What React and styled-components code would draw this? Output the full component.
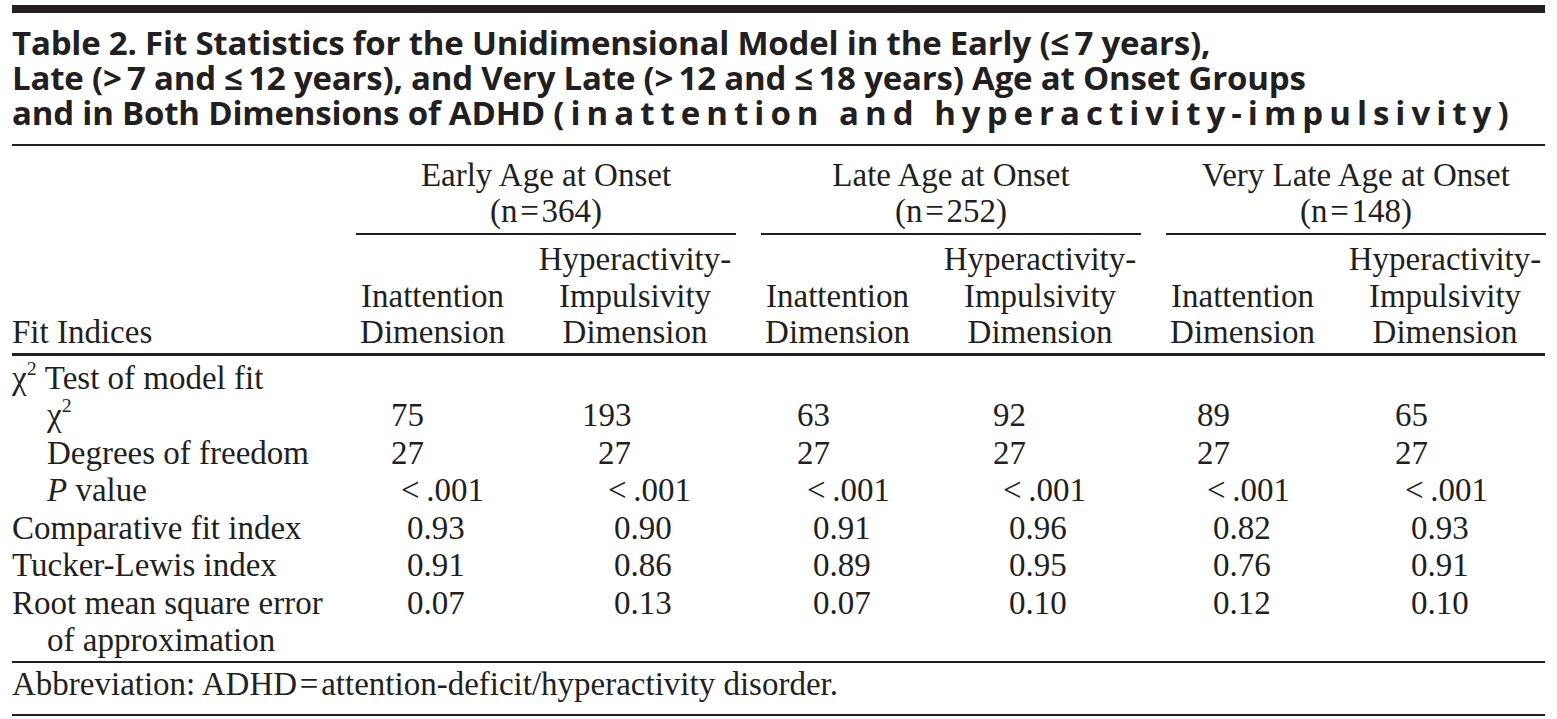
import React from "react";
import styled, { createGlobalStyle } from "styled-components";

const GlobalStyle = createGlobalStyle`
  html, body {
    margin: 0;
    padding: 0;
    background: #ffffff;
  }
  body {
    color: #231f20;
    font-family: "Liberation Serif", "Times New Roman", serif;
  }
`;

const groups = [
  { title: "Early Age at Onset", n: 364 },
  { title: "Late Age at Onset", n: 252 },
  { title: "Very Late Age at Onset", n: 148 },
];

// left edge of a two digit integer, relative to each column start
const anchors = [35, 64, 36, 54, 31, 51];

const rows = [
  { label: <>χ<Sup>2</Sup> Test of model fit</>, values: null },
  { label: <>χ<Sup>2</Sup></>, indent: true, kind: "int", values: ["75", "193", "63", "92", "89", "65"] },
  { label: "Degrees of freedom", indent: true, kind: "int", values: ["27", "27", "27", "27", "27", "27"] },
  { label: <><i>P</i> value</>, indent: true, kind: "p", values: Array(6).fill("<\u2009.001") },
  { label: "Comparative fit index", kind: "dec", values: ["0.93", "0.90", "0.91", "0.96", "0.82", "0.93"] },
  { label: "Tucker-Lewis index", kind: "dec", values: ["0.91", "0.86", "0.89", "0.95", "0.76", "0.91"] },
  { label: "Root mean square error", kind: "dec", values: ["0.07", "0.13", "0.07", "0.10", "0.12", "0.10"] },
  { label: "of approximation", indent: true, values: null },
];

const shift = (kind, value) => {
  if (kind === "int") return -(value.length - 2) * 16;
  if (kind === "p") return 10;
  return 16;
};

function Sup({ children }) {
  return <SupText>{children}</SupText>;
}

const App = () => {
  return (
    <>
      <GlobalStyle />
      <Page>
        <Caption>
          <TitleLine>
            Table 2. Fit Statistics for the Unidimensional Model in the Early (≤{"\u2009"}7 years),
          </TitleLine>
          <TitleLine>
            Late (&gt;{"\u2009"}7 and ≤{"\u2009"}12 years), and Very Late (&gt;{"\u2009"}12 and ≤{"\u2009"}18 years) Age at Onset Groups
          </TitleLine>
          <TitleLine>
            and in Both Dimensions of ADHD{" "}
            <Tracked $track={6}>(inattention and hyperactivity-impulsivity)</Tracked>
          </TitleLine>
        </Caption>

        <HeadGrid>
          <FitIndices>Fit Indices</FitIndices>
          {groups.map((g) => (
            <GroupHead key={g.title}>
              {g.title}
              <br />({"n\u200a=\u200a"}{g.n})
            </GroupHead>
          ))}
          {groups.map((g) => (
            <React.Fragment key={g.title}>
              <SubHead>
                Inattention
                <br />
                Dimension
              </SubHead>
              <SubHead>
                Hyperactivity-
                <br />
                Impulsivity
                <br />
                Dimension
              </SubHead>
            </React.Fragment>
          ))}
        </HeadGrid>

        <BodyGrid>
          {rows.map((row, i) => (
            <React.Fragment key={i}>
              <Label $indent={row.indent} $full={!row.values}>
                {row.label}
              </Label>
              {row.values &&
                row.values.map((v, j) => (
                  <Value key={j} $offset={anchors[j] + shift(row.kind, v)}>
                    {v}
                  </Value>
                ))}
            </React.Fragment>
          ))}
        </BodyGrid>

        <Footnote>
          Abbreviation: ADHD{"\u200a=\u200a"}attention-deficit/hyperactivity disorder.
        </Footnote>
      </Page>
    </>
  );
};

const Page = styled.div`
  width: 1557px;
  height: 719px;
  box-sizing: border-box;
  padding: 5px 12px 0 12px;
  overflow: hidden;
`;

const Caption = styled.div`
  border-top: 8px solid #231f20;
  border-bottom: 2px solid #231f20;
  padding: 12px 0 14px;
  font-family: "Open Sans", "Noto Sans", sans-serif;
  font-weight: 700;
  font-size: 33px;
  line-height: 35px;
  white-space: nowrap;
`;

const TitleLine = styled.div`
  height: 35px;
  letter-spacing: -0.2px;
`;

const Tracked = styled.span`
  letter-spacing: ${(p) => p.$track}px;
`;

const columns = `
  display: grid;
  grid-template-columns: 319px repeat(3, 153px 202px);
  column-gap: 25px;
  font-size: 33px;
  white-space: nowrap;
`;

const HeadGrid = styled.div`
  ${columns}
  padding-bottom: 2px;
  border-bottom: 3px solid #231f20;
`;

const FitIndices = styled.div`
  grid-column: 1;
  grid-row: 1 / span 2;
  align-self: end;
  line-height: 36.5px;
`;

const GroupHead = styled.div`
  grid-column: span 2;
  grid-row: 1;
  text-align: center;
  line-height: 36px;
  padding: 11px 0 4px;
  border-bottom: 2px solid #231f20;
`;

const SubHead = styled.div`
  grid-row: 2;
  align-self: end;
  text-align: center;
  line-height: 36.5px;
  padding-top: 6px;
`;

const BodyGrid = styled.div`
  ${columns}
  padding: 4px 0 1px;
  line-height: 37.5px;
  border-bottom: 2px solid #231f20;
`;

const Label = styled.div`
  grid-column: ${(p) => (p.$full ? "1 / -1" : "1")};
  padding-left: ${(p) => (p.$indent ? "35px" : "0")};
`;

const Value = styled.div`
  padding-left: ${(p) => p.$offset}px;
`;

const SupText = styled.sup`
  font-size: 0.6em;
  line-height: 0;
  vertical-align: 0.7em;
`;

const Footnote = styled.div`
  font-size: 33px;
  line-height: 33px;
  padding: 5px 0 13px;
  border-bottom: 2px solid #231f20;
  white-space: nowrap;
`;

export default App;
